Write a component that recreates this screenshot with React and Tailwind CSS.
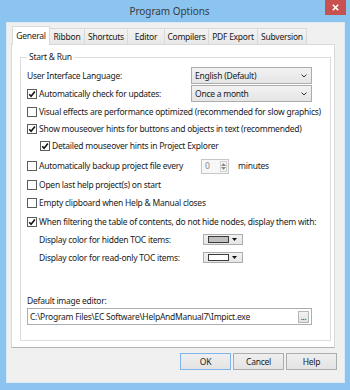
import React from "react";

function Check({ checked }) {
  return (
    <span className="w-[10px] h-[10px] border border-[#5c5c5c] bg-white flex items-center justify-center shrink-0">
      {checked && (
        <svg width="8" height="8" viewBox="0 0 8 8">
          <path d="M1.2 4.2 L3.1 6.2 L6.9 1.4" stroke="#151515" strokeWidth="1.6" fill="none" />
        </svg>
      )}
    </span>
  );
}

function Combo({ text }) {
  return (
    <div className="w-[121px] h-[17px] border border-[#acacac] bg-gradient-to-b from-[#f2f2f2] to-[#e5e5e5] flex items-center justify-between pl-[3px] pr-[4px]">
      <span>{text}</span>
      <svg width="6" height="4" viewBox="0 0 6 4">
        <path d="M0.5 0.5 L3 3 L5.5 0.5" stroke="#333" strokeWidth="1" fill="none" />
      </svg>
    </div>
  );
}

function ColorBtn({ fill }) {
  return (
    <div className="w-[40px] h-[11px] border border-[#acacac] bg-gradient-to-b from-[#f2f2f2] to-[#e5e5e5] flex items-center pl-[4px] gap-[3px]">
      <span className={"w-[21px] h-[7px] border border-[#3a3a3a] " + fill}></span>
      <svg width="5" height="3" viewBox="0 0 5 3">
        <path d="M0 0 L5 0 L2.5 3 Z" fill="#111" />
      </svg>
    </div>
  );
}

function Tab({ label, w, selected }) {
  if (selected) {
    return (
      <div className={"relative z-10 h-[19px] -mb-[1px] bg-white border border-b-0 border-[#d9d9d9] flex items-center justify-center text-[#1a1a1a] " + w}>
        {label}
      </div>
    );
  }
  return (
    <div className={"h-[16px] -ml-[1px] bg-gradient-to-b from-[#f3f3f3] to-[#e8e8e8] border border-b-0 border-[#d9d9d9] flex items-center justify-center text-[#1a1a1a] " + w}>
      {label}
    </div>
  );
}

function Btn({ label, def }) {
  return (
    <div
      className={
        "w-[51px] h-[17px] border bg-gradient-to-b from-[#efefef] to-[#e3e3e3] flex items-center justify-center text-[#1a1a1a] " +
        (def ? "border-[#7fb5ea]" : "border-[#adadad]")
      }
    >
      {label}
    </div>
  );
}

export default function App() {
  return (
    <div className="w-[350px] h-[390px] bg-[#8cc4f0] flex flex-col pl-[6px] pr-[5px] pb-[7px] font-['Noto_Sans',sans-serif] text-[8.5px] tracking-[-0.25px] leading-[12px] text-[#1b1b1b] whitespace-nowrap">
      <div className="h-[22px] shrink-0 flex items-start">
        <div className="flex-1 h-[22px] flex items-center justify-center pl-[8px] text-[10px] tracking-[-0.05px] text-[#3a3a3a]">
          Program Options
        </div>
        <div className="w-[21px] h-[15px] -mr-[1px] bg-[#c75050] flex items-center justify-center">
          <svg width="7" height="7" viewBox="0 0 7 7">
            <path d="M0.8 0.8 L6.2 6.2 M6.2 0.8 L0.8 6.2" stroke="#fff" strokeWidth="1.6" />
          </svg>
        </div>
      </div>
      <div className="flex-1 bg-[#f0f0f0] border border-[#dbe9f6] flex flex-col pt-[3px] pr-[7px] pb-[12px]">
        <div className="h-[18px] flex items-end pl-[5px]">
          <Tab label="General" w="w-[38px]" selected />
          <Tab label="Ribbon" w="w-[36px]" />
          <Tab label="Shortcuts" w="w-[44px]" />
          <Tab label="Editor" w="w-[38px]" />
          <Tab label="Compilers" w="w-[45px]" />
          <Tab label="PDF Export" w="w-[50px]" />
          <Tab label="Subversion" w="w-[50px]" />
        </div>
        <div className="ml-[4px] mr-[2px] bg-white border border-[#d9d9d9] border-b-[#b4b4b4] pt-[5px] pl-[8px] pr-[3px] pb-[6px]">
          <fieldset className="border border-[#dcdcdc] pl-[6px] pr-[3px] pt-[3px] pb-[15px]">
            <legend className="px-[2px] leading-[14px]">Start &amp; Run</legend>
            <div className="flex flex-col">
              <div className="h-[17px] flex items-center">
                <span className="w-[164px]">User Interface Language:</span>
                <Combo text="English (Default)" />
              </div>
              <div className="h-[17px] mt-[1px] flex items-center">
                <div className="w-[164px] flex items-center gap-[2px]">
                  <Check checked />
                  <span>Automatically check for updates:</span>
                </div>
                <Combo text="Once a month" />
              </div>
              <div className="h-[16px] mt-[2px] flex items-center gap-[2px]">
                <Check />
                <span>Visual effects are performance optimized (recommended for slow graphics)</span>
              </div>
              <div className="h-[17px] flex items-center gap-[2px]">
                <Check checked />
                <span>Show mouseover hints for buttons and objects in text (recommended)</span>
              </div>
              <div className="h-[17px] flex items-center gap-[2px] pl-[13px]">
                <Check checked />
                <span>Detailed mouseover hints in Project Explorer</span>
              </div>
              <div className="h-[16px] mt-[4px] flex items-center">
                <div className="w-[174px] flex items-center gap-[2px]">
                  <Check />
                  <span>Automatically backup project file every</span>
                </div>
                <div className="w-[28px] h-[15px] border border-[#c6c6c6] bg-[#f7f7f7] flex items-center justify-between pl-[3px] pr-[1px] text-[#8a8a8a]">
                  <span>0</span>
                  <div className="w-[7px] h-[11px] border border-[#d0d0d0] flex flex-col items-center justify-center gap-[1px]">
                    <svg width="5" height="3" viewBox="0 0 5 3"><path d="M0 3 L2.5 0 L5 3 Z" fill="#8a8a8a" /></svg>
                    <svg width="5" height="3" viewBox="0 0 5 3"><path d="M0 0 L5 0 L2.5 3 Z" fill="#8a8a8a" /></svg>
                  </div>
                </div>
                <span className="ml-[9px]">minutes</span>
              </div>
              <div className="h-[17px] mt-[2px] flex items-center gap-[2px]">
                <Check />
                <span>Open last help project(s) on start</span>
              </div>
              <div className="h-[17px] mt-[1px] flex items-center gap-[2px]">
                <Check />
                <span>Empty clipboard when Help &amp; Manual closes</span>
              </div>
              <div className="h-[17px] mt-[2px] flex items-center gap-[2px]">
                <Check checked />
                <span>When filtering the table of contents, do not hide nodes, display them with:</span>
              </div>
              <div className="h-[17px] mt-[1px] flex items-center pl-[12px]">
                <span className="w-[164px]">Display color for hidden TOC items:</span>
                <ColorBtn fill="bg-[#c0c0c0]" />
              </div>
              <div className="h-[17px] mt-[1px] flex items-center pl-[12px]">
                <span className="w-[164px]">Display color for read-only TOC items:</span>
                <ColorBtn fill="bg-white" />
              </div>
              <div className="h-[14px] mt-[28px] flex items-center">Default image editor:</div>
              <div className="w-[285px] h-[17px] border border-[#abadb3] bg-white flex items-center justify-between pl-[2px] pr-[2px]">
                <span>C:\Program Files\EC Software\HelpAndManual7\Impict.exe</span>
                <div className="w-[11px] h-[12px] border border-[#b5b5b5] bg-gradient-to-b from-[#f2f2f2] to-[#e3e3e3] flex items-end justify-center text-[8px] leading-[8px] pb-[1px]">
                  ...
                </div>
              </div>
            </div>
          </fieldset>
        </div>
        <div className="mt-[5px] flex justify-end gap-[2px]">
          <Btn label="OK" def />
          <Btn label="Cancel" />
          <Btn label="Help" />
        </div>
      </div>
    </div>
  );
}
